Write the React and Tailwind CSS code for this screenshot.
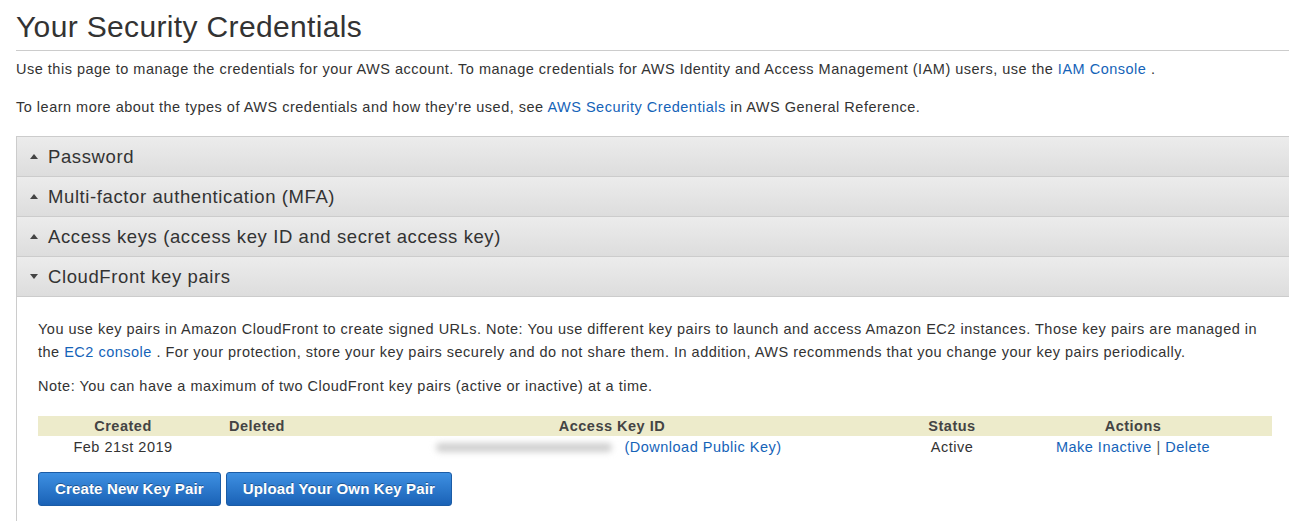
import React from "react";

const Tri = ({ down }) => (
  <svg width="8" height="5" viewBox="0 0 8 5" className="shrink-0">
    {down ? <path d="M0 0 L8 0 L4 5 Z" fill="#444" /> : <path d="M0 5 L8 5 L4 0 Z" fill="#444" />}
  </svg>
);

const Header = ({ label, down }) => (
  <div className="h-[40px] flex items-center border-t border-l border-[#cccccc] bg-gradient-to-b from-[#ececec] to-[#dddddd] pl-[13px] gap-[10px]">
    <Tri down={down} />
    <span className="text-[18.5px] tracking-[0.6px] text-[#333] leading-[22px]">{label}</span>
  </div>
);

const link = "text-[#1563b8]";
const btn =
  "h-[34px] px-[16px] rounded-[3px] border border-[#1b5ca6] bg-gradient-to-b from-[#3e90e2] to-[#1a62b6] text-white font-bold text-[15px] tracking-[0.15px] [text-shadow:0_-1px_0_rgba(0,0,0,0.35)]";

export default function App() {
  return (
    <div className="w-[1289px] h-[521px] overflow-hidden bg-white" style={{ fontFamily: '"Liberation Sans", Arial, sans-serif' }}>
      <div className="ml-4 w-[1290px]">
        <h1 className="pt-[9px] pb-[5px] text-[30px] tracking-[0.35px] leading-[36px] text-[#333] border-b border-[#cccccc]">Your Security Credentials</h1>
        <div className="text-[14.5px] tracking-[0.5px] text-[#333]">
          <p className="mt-[8px] leading-[20px]">
            Use this page to manage the credentials for your AWS account. To manage credentials for AWS Identity and Access Management (IAM) users, use the <span className={link}>IAM Console</span> .
          </p>
          <p className="mt-[18px] leading-[20px]">
            To learn more about the types of AWS credentials and how they're used, see <span className={link}>AWS Security Credentials</span> in AWS General Reference.
          </p>
        </div>
        <div className="mt-[19px]">
          <Header label="Password" />
          <Header label="Multi-factor authentication (MFA)" />
          <Header label="Access keys (access key ID and secret access key)" />
          <div className="border-b border-[#cccccc]">
            <Header label="CloudFront key pairs" down />
          </div>
          <div className="border-l border-[#cccccc] pl-[21px] pt-[21px] pb-[20px] text-[14.5px] tracking-[0.5px] text-[#333]">
            <p className="w-[1222px] leading-[23px]">
              You use key pairs in Amazon CloudFront to create signed URLs. Note: You use different key pairs to launch and access Amazon EC2 instances. Those key pairs are managed in the <span className={link}>EC2 console</span> . For your protection, store your key pairs securely and do not share them. In addition, AWS recommends that you change your key pairs periodically.
            </p>
            <p className="mt-[11px] leading-[23px]">Note: You can have a maximum of two CloudFront key pairs (active or inactive) at a time.</p>
            <div className="mt-[18px] w-[1234px]">
              <div className="grid grid-cols-[170px_106px_596px_84px_278px] bg-[#edebcb] h-[20px] items-center font-bold text-[#444] leading-[20px] text-center">
                <div>Created</div>
                <div className="pr-[8px]">Deleted</div>
                <div>Access Key ID</div>
                <div>Status</div>
                <div>Actions</div>
              </div>
              <div className="grid grid-cols-[170px_106px_596px_84px_278px] h-[22px] items-center text-center leading-[20px]">
                <div>Feb 21st 2019</div>
                <div></div>
                <div className="flex items-center justify-center pr-[18px]">
                  <div className="w-[200px] h-[20px] bg-white flex items-center px-[12px]">
                    <div className="w-full h-[9px] rounded-full bg-[#cfcfcf] blur-[3px]"></div>
                  </div>
                  <span className={link}>(Download Public Key)</span>
                </div>
                <div>Active</div>
                <div>
                  <span className={link}>Make Inactive</span> <span className="text-[#555]">|</span> <span className={link}>Delete</span>
                </div>
              </div>
            </div>
            <div className="mt-[14px] flex gap-[5px]">
              <button className={btn}>Create New Key Pair</button>
              <button className={btn}>Upload Your Own Key Pair</button>
            </div>
          </div>
        </div>
      </div>
    </div>
  );
}
